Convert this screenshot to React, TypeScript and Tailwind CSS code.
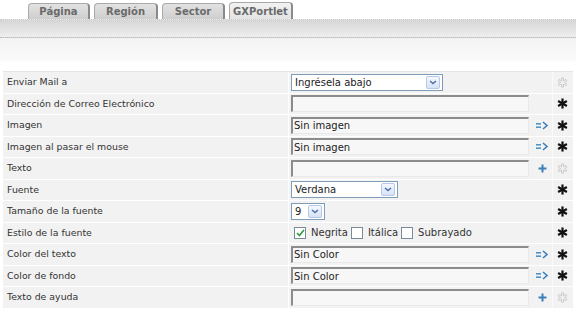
import React from 'react';

type Kind = 'select' | 'text' | 'check';

interface Fila {
  label: string;
  kind: Kind;
  value?: string;
  selectW?: number;
  action?: 'go' | 'add';
  required: boolean;
}

const filas: Fila[] = [
  { label: 'Enviar Mail a', kind: 'select', value: 'Ingrésela abajo', selectW: 152, required: false },
  { label: 'Dirección de Correo Electrónico', kind: 'text', value: '', required: true },
  { label: 'Imagen', kind: 'text', value: 'Sin imagen', action: 'go', required: true },
  { label: 'Imagen al pasar el mouse', kind: 'text', value: 'Sin imagen', action: 'go', required: true },
  { label: 'Texto', kind: 'text', value: '', action: 'add', required: false },
  { label: 'Fuente', kind: 'select', value: 'Verdana', selectW: 107, required: true },
  { label: 'Tamaño de la fuente', kind: 'select', value: '9', selectW: 34, required: true },
  { label: 'Estilo de la fuente', kind: 'check', required: true },
  { label: 'Color del texto', kind: 'text', value: 'Sin Color', action: 'go', required: true },
  { label: 'Color de fondo', kind: 'text', value: 'Sin Color', action: 'go', required: true },
  { label: 'Texto de ayuda', kind: 'text', value: '', action: 'add', required: false },
];

const tabs = [
  { name: 'Página', w: 62 },
  { name: 'Región', w: 64 },
  { name: 'Sector', w: 63 },
  { name: 'GXPortlet', w: 64, active: true },
];

const Asterisco = ({ solid }: { solid: boolean }) => (
  <svg width="11" height="11" viewBox="0 0 12 12">
    {solid ? (
      <g stroke="#111" strokeWidth="2.4" strokeLinecap="butt">
        <line x1="6" y1="0.5" x2="6" y2="11.5" />
        <line x1="1.2" y1="3.2" x2="10.8" y2="8.8" />
        <line x1="1.2" y1="8.8" x2="10.8" y2="3.2" />
      </g>
    ) : (
      <g stroke="#c4c4c4" strokeWidth="0.9" fill="none">
        <path d="M5 1h2v3.2l2.8-1.6 1 1.7L8 6l2.8 1.7-1 1.7L7 7.8V11H5V7.8L2.2 9.4l-1-1.7L4 6 1.2 4.3l1-1.7L5 4.2z" />
      </g>
    )}
  </svg>
);

const IrIcono = () => (
  <svg width="13" height="9" viewBox="0 0 13 9">
    <g fill="#4f93c9">
      <rect x="0" y="2" width="5" height="1.6" />
      <rect x="0" y="5.4" width="5" height="1.6" />
    </g>
    <path d="M7 1l4 3.5L7 8" stroke="#3d7fb8" strokeWidth="1.6" fill="none" />
  </svg>
);

const MasIcono = () => (
  <svg width="9" height="9" viewBox="0 0 9 9">
    <g fill="#3d7fb8">
      <rect x="3.5" y="0.5" width="2" height="8" />
      <rect x="0.5" y="3.5" width="8" height="2" />
    </g>
  </svg>
);

const Flecha = () => (
  <span className="flex h-[13px] w-[14px] items-center justify-center rounded-[2px] border border-[#b5c8e8] bg-gradient-to-b from-[#f4f8ff] to-[#d6e2f6]">
    <svg width="8" height="5" viewBox="0 0 8 5">
      <path d="M1 1l3 2.6L7 1" stroke="#4d6fa8" strokeWidth="1.5" fill="none" />
    </svg>
  </span>
);

const Casilla = ({ checked }: { checked?: boolean }) => (
  <span className="flex h-[12px] w-[12px] items-center justify-center border border-[#7a8a99] bg-white">
    {checked && (
      <svg width="9" height="8" viewBox="0 0 9 8">
        <path d="M1 4l2.4 2.5L8 1" stroke="#2f9a3a" strokeWidth="1.6" fill="none" />
      </svg>
    )}
  </span>
);

const Control = ({ fila }: { fila: Fila }) => {
  if (fila.kind === 'select') {
    return (
      <div
        className="flex h-[17px] items-center justify-between border border-[#7f9db9] bg-white pl-[3px] pr-[2px] text-[#222]"
        style={{ width: fila.selectW }}
      >
        <span>{fila.value}</span>
        <Flecha />
      </div>
    );
  }
  if (fila.kind === 'check') {
    return (
      <div className="flex items-center pl-[3px] text-[#333]">
        <Casilla checked />
        <span className="ml-[5px] mr-[3px]">Negrita</span>
        <Casilla />
        <span className="ml-[5px] mr-[3px]">Itálica</span>
        <Casilla />
        <span className="ml-[5px]">Subrayado</span>
      </div>
    );
  }
  return (
    <div className="flex h-[17px] w-[238px] items-center border-t-2 border-l-2 border-r border-b border-t-[#8c8c8c] border-l-[#8c8c8c] border-r-[#e9e9e9] border-b-[#e9e9e9] bg-[#f7f7f7] pl-[1px] text-[#222]">
      {fila.value}
    </div>
  );
};

export default function App() {
  return (
    <div className="h-[310px] w-[576px] overflow-hidden bg-white text-[10px] text-[#333] [font-family:'DejaVu_Sans',Verdana,sans-serif]">
      {/* Pestañas */}
      <div className="flex h-[19px] items-end gap-[4px] pl-[28px] pt-[3px]">
        {tabs.map(t => (
          <div
            key={t.name}
            style={{ width: t.w }}
            className={
              t.active
                ? 'flex h-[17px] items-center justify-center rounded-t-[4px] border border-b-0 border-[#a9a9a9] border-r-2 border-r-[#8a8a8a] bg-gradient-to-b from-[#f2f2f2] to-[#e3e3e3] font-bold text-[#6a6a6a]'
                : 'flex h-[16px] items-center justify-center rounded-t-[4px] border border-b-0 border-[#a9a9a9] border-r-2 border-r-[#8a8a8a] bg-gradient-to-b from-[#e2e2e2] to-[#cfcfcf] font-bold text-[#6a6a6a]'
            }
          >
            {t.name}
          </div>
        ))}
      </div>

      {/* Barra */}
      <div className="h-[19px] border-t border-[#c8c8c8] border-b border-b-[#b9b9b9] border-dotted bg-gradient-to-b from-[#d6d6d6] to-[#eeeeee]" />
      <div className="h-[24px] bg-gradient-to-b from-[#f3f3f3] to-[#fbfbfb]" />
      <div className="h-[9px]" />

      {/* Tabla */}
      <div className="mx-[3px] border-t border-[#e4e4e4]">
        {filas.map(f => (
          <div key={f.label} className="flex h-[21.5px] border-b border-white bg-[#f2f2f2]">
            <div className="flex w-[285px] items-center pl-[4px] text-[9.4px] text-[#333]">{f.label}</div>
            <div className="w-[1px] bg-white" />
            <div className="flex w-[243px] items-center pl-[2px]">
              <Control fila={f} />
            </div>
            <div className="flex w-[20px] items-center justify-center">
              {f.action === 'go' && <IrIcono />}
              {f.action === 'add' && <MasIcono />}
            </div>
            <div className="w-[1px] bg-[#fafafa]" />
            <div className="flex w-[18px] items-center justify-center">
              <Asterisco solid={f.required} />
            </div>
          </div>
        ))}
      </div>
    </div>
  );
}
